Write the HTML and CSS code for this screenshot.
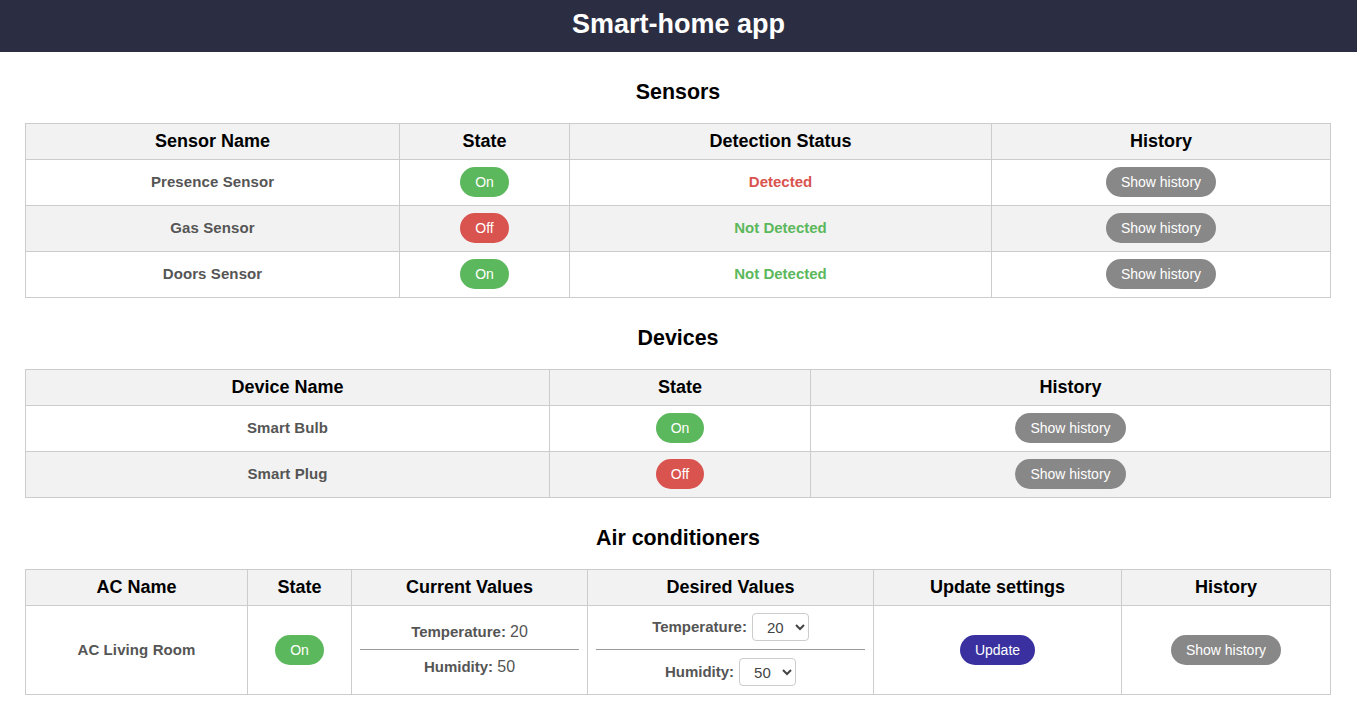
FILE: index.html
```html
<!DOCTYPE html>
<html lang="en">
<head>
<meta charset="utf-8">
<title>Smart-home app</title>
<link rel="stylesheet" href="styles.css">
</head>
<body>
<header class="topbar">
  <h1 class="app-title">Smart-home app</h1>
</header>
<main class="content">
  <section class="section">
    <h2 class="section-title">Sensors</h2>
    <table class="grid">
      <colgroup>
        <col class="s-c1"><col class="s-c2"><col class="s-c3"><col class="s-c4">
      </colgroup>
      <thead>
        <tr><th>Sensor Name</th><th>State</th><th>Detection Status</th><th>History</th></tr>
      </thead>
      <tbody>
        <tr>
          <td class="name">Presence Sensor</td>
          <td><button class="pill on">On</button></td>
          <td class="status detected">Detected</td>
          <td><button class="pill hist">Show history</button></td>
        </tr>
        <tr>
          <td class="name">Gas Sensor</td>
          <td><button class="pill off">Off</button></td>
          <td class="status clear">Not Detected</td>
          <td><button class="pill hist">Show history</button></td>
        </tr>
        <tr>
          <td class="name">Doors Sensor</td>
          <td><button class="pill on">On</button></td>
          <td class="status clear">Not Detected</td>
          <td><button class="pill hist">Show history</button></td>
        </tr>
      </tbody>
    </table>
  </section>

  <section class="section">
    <h2 class="section-title">Devices</h2>
    <table class="grid">
      <colgroup>
        <col class="d-c1"><col class="d-c2"><col class="d-c3">
      </colgroup>
      <thead>
        <tr><th>Device Name</th><th>State</th><th>History</th></tr>
      </thead>
      <tbody>
        <tr>
          <td class="name">Smart Bulb</td>
          <td><button class="pill on">On</button></td>
          <td><button class="pill hist">Show history</button></td>
        </tr>
        <tr>
          <td class="name">Smart Plug</td>
          <td><button class="pill off">Off</button></td>
          <td><button class="pill hist">Show history</button></td>
        </tr>
      </tbody>
    </table>
  </section>

  <section class="section">
    <h2 class="section-title">Air conditioners</h2>
    <table class="grid">
      <colgroup>
        <col class="a-c1"><col class="a-c2"><col class="a-c3"><col class="a-c4"><col class="a-c5"><col class="a-c6">
      </colgroup>
      <thead>
        <tr><th>AC Name</th><th>State</th><th>Current Values</th><th>Desired Values</th><th>Update settings</th><th>History</th></tr>
      </thead>
      <tbody>
        <tr class="ac-row">
          <td class="name">AC Living Room</td>
          <td><button class="pill on">On</button></td>
          <td class="values">
            <div class="value-line"><span class="label">Temperature:</span> <span class="num">20</span></div>
            <hr class="divider">
            <div class="value-line"><span class="label">Humidity:</span> <span class="num">50</span></div>
          </td>
          <td class="values">
            <div class="set-line">
              <label class="label" for="t">Temperature:</label>
              <select id="t" class="picker"><option>20</option></select>
            </div>
            <hr class="divider">
            <div class="set-line">
              <label class="label" for="h">Humidity:</label>
              <select id="h" class="picker"><option>50</option></select>
            </div>
          </td>
          <td><button class="pill update">Update</button></td>
          <td><button class="pill hist">Show history</button></td>
        </tr>
      </tbody>
    </table>
  </section>
</main>
</body>
</html>
```

FILE: styles.css
```css
* { box-sizing: border-box; }

html, body {
  margin: 0;
  padding: 0;
  background: #ffffff;
  font-family: "Liberation Sans", Arial, sans-serif;
  color: #000;
}

.topbar {
  height: 52px;
  background: #2b2e42;
  display: flex;
  align-items: center;
  justify-content: center;
}

.app-title {
  margin: 0;
  color: #ffffff;
  font-size: 27px;
  font-weight: bold;
  line-height: 32px;
  padding-bottom: 4px;
}

.content {
  padding: 0 26px 0 25px;
}

.section-title {
  margin: 27px 0 18px;
  font-size: 21.4px;
  line-height: 26px;
  font-weight: bold;
  text-align: center;
}

.grid {
  width: 100%;
  border-collapse: collapse;
  table-layout: fixed;
  margin-bottom: 1px;
}

.grid th,
.grid td {
  border: 1px solid #cccccc;
  text-align: center;
  vertical-align: middle;
}

.grid th {
  background: #f2f2f2;
  font-size: 18px;
  font-weight: bold;
  line-height: 19px;
  padding: 8px;
}

.grid td {
  padding: 7px 8px 8px;
  font-size: 15px;
  line-height: 18px;
}

.grid tbody tr:nth-child(even) td {
  background: #f2f2f2;
}

/* column widths */
.s-c1 { width: 374px; }
.s-c2 { width: 170px; }
.s-c3 { width: 422px; }
.s-c4 { width: auto; }

.d-c1 { width: 524px; }
.d-c2 { width: 261px; }
.d-c3 { width: auto; }

.a-c1 { width: 222px; }
.a-c2 { width: 104px; }
.a-c3 { width: 236px; }
.a-c4 { width: 286px; }
.a-c5 { width: 248px; }
.a-c6 { width: auto; }

.name {
  color: #555555;
  font-weight: bold;
  letter-spacing: 0.1px;
}

.status {
  font-size: 14px;
  font-weight: bold;
}
.status.detected { color: #d9534f; }
.status.clear { color: #5cb85c; }

.pill {
  display: inline-block;
  height: 30px;
  padding: 0 15px;
  border: none;
  border-radius: 15px;
  color: #ffffff;
  font-family: "Liberation Sans", Arial, sans-serif;
  font-size: 14px;
  line-height: 30px;
  vertical-align: middle;
  cursor: pointer;
}
.pill.on { background: #5cb85c; }
.pill.off { background: #d9534f; }
.pill.hist { background: #888888; }
.pill.update { background: #3a30a0; }

.ac-row td {
  padding: 7px 8px 8px;
}

.values {
  color: #555555;
}

.value-line {
  line-height: 18px;
}

.label {
  font-weight: bold;
  font-size: 15px;
  color: #555555;
}

.num {
  font-size: 16px;
  font-weight: normal;
}

.divider {
  border: 0;
  border-top: 1px solid #999999;
  margin: 8px 0;
  height: 0;
}

.set-line {
  display: flex;
  align-items: center;
  justify-content: center;
  gap: 5px;
  height: 28px;
}

.picker {
  width: 57px;
  height: 28px;
  border: 1px solid #cccccc;
  border-radius: 4px;
  background: #ffffff;
  color: #444444;
  font-family: "Liberation Sans", Arial, sans-serif;
  font-size: 15px;
  padding: 0 4px 0 10px;
}
```
